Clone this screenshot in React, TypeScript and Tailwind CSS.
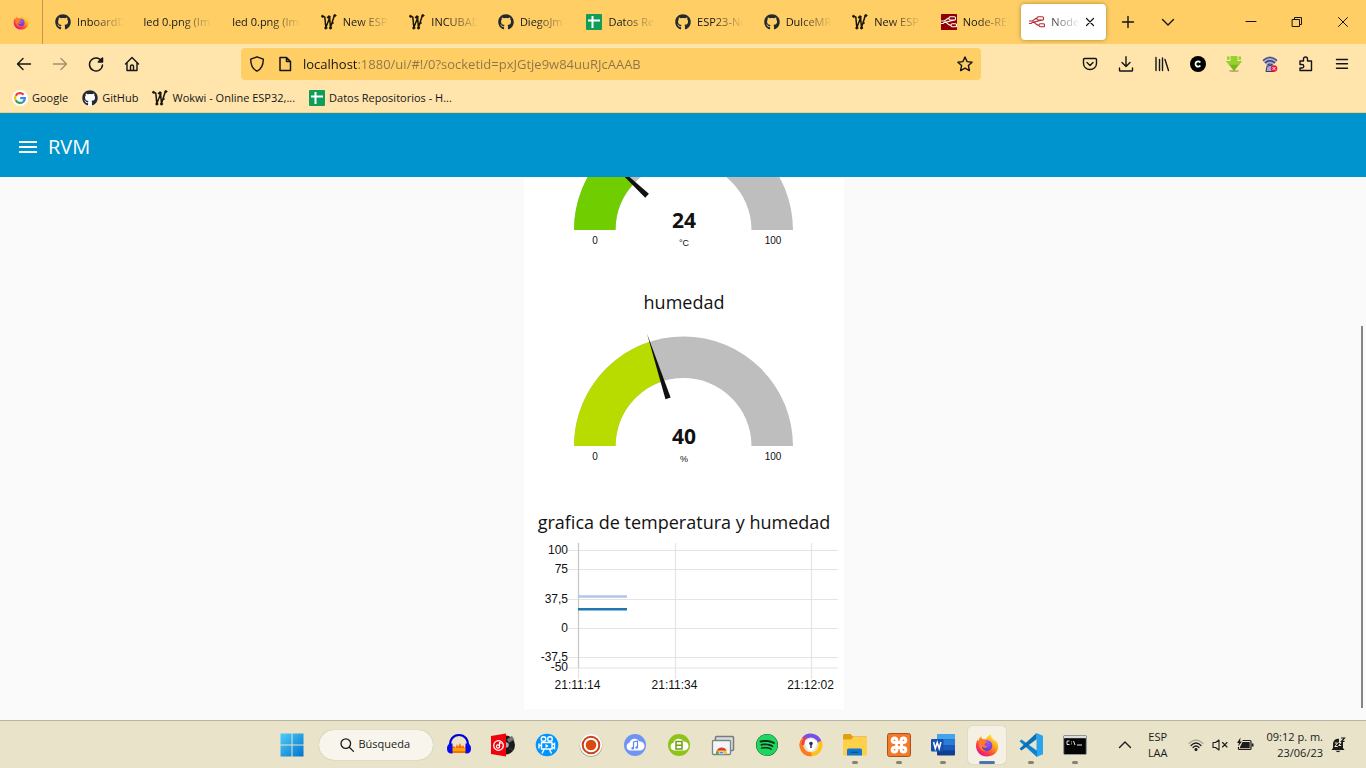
import type { ReactNode } from "react";
import { FaGithub, FaSpotify } from "react-icons/fa";
import { SiXampp } from "react-icons/si";

const stroke = {
  fill: "none",
  stroke: "currentColor",
  strokeLinecap: "round" as const,
  strokeLinejoin: "round" as const,
};

function Icon({ d, width = 1.4 }: { d: string; width?: number }) {
  return (
    <svg viewBox="0 0 16 16" className="size-4 shrink-0" {...stroke} strokeWidth={width} aria-hidden="true">
      <path d={d} />
    </svg>
  );
}

function Firefox({ className, id }: { className: string; id: string }) {
  return (
    <svg viewBox="0 0 24 24" className={className} aria-hidden="true">
      <defs>
        <linearGradient id={`${id}-body`} x1="0.85" y1="0.1" x2="0.2" y2="0.95">
          <stop offset="0" stopColor="#fff044" />
          <stop offset="0.35" stopColor="#ffa41c" />
          <stop offset="0.65" stopColor="#ff4f36" />
          <stop offset="1" stopColor="#e8118a" />
        </linearGradient>
        <radialGradient id={`${id}-globe`} cx="0.6" cy="0.25" r="0.8">
          <stop offset="0" stopColor="#b14dff" />
          <stop offset="1" stopColor="#4c42c7" />
        </radialGradient>
      </defs>
      <path
        d="M16.2 1c-.4 2 .2 3.4 1.7 4.7 1 .9 1.8 1.8 2.2 2.7.1-.8 0-1.3-.2-1.9 2.5 2.2 3.5 5 3.2 8C22.5 20 17.8 23.4 12 23.4 5.700 23.400 1 18.800 1 12.700c0-2.500.7-4.600 1.900-6.200 0 .7.1 1.200.4 1.700C3.800 6.300 4.700 4.600 6.200 3.200c.1 1.300.6 2.400 1.600 3.100 1-.3 2.300-.4 3.300-.1.8-2.200 2.700-4.200 5.100-5.200z"
        fill={`url(#${id}-body)`}
      />
      <circle cx="12" cy="12.6" r="5.300" fill={`url(#${id}-globe)`} />
      <path
        d="M3.500 8.200c1.300-1.700 3-2.200 5-1.700.4 1 1.400 1.700 3.500 2-.2 1.400-1.400 1.700-2.600 2.300 0 2 1.700 2.900 3.600 2.500-1.200 1.700-4.100 1.900-5.700.2-.5 2.200 1.400 4.500 4.600 4.500-4.500 1.500-8.700-2-8.400-9.800z"
        fill="#ff7a2a"
      />
    </svg>
  );
}

function Github() {
  return <FaGithub className="size-4 shrink-0 text-[#24292f]" />;
}

function Wokwi() {
  return (
    <svg viewBox="0 0 16 16" className="size-4 shrink-0 text-[#1a1508]" {...stroke} strokeWidth="1.5">
      <path d="M1.500 2.500 3.800 3l1 10.500L8.600 4l.9 9.500L13 2.500" />
      <path d="M6.500 3.500 8.600 4" />
      <g fill="currentColor" strokeWidth="0.8">
        <circle cx="1.5" cy="2.3" r="1" />
        <circle cx="4.8" cy="14" r="1.1" />
        <circle cx="9.5" cy="14" r="1.1" />
        <circle cx="8" cy="2.8" r="1.1" />
        <circle cx="13.8" cy="1.6" r="1.1" />
        <circle cx="11.7" cy="9" r="0.5" />
      </g>
    </svg>
  );
}

function Sheets() {
  return (
    <svg viewBox="0 0 16 16" className="size-4 shrink-0">
      <rect width="16" height="16" rx="1" fill="#0f9d58" />
      <path d="M2 6.500h12M6.500 2v12" stroke="#fff" strokeWidth="2" />
    </svg>
  );
}

function NodeRed({ active = false }: { active?: boolean }) {
  return (
    <svg viewBox="0 0 16 16" className="size-4 shrink-0">
      {!active && <rect width="16" height="16" rx="0.5" fill="#8f0000" />}
      <g fill="none" stroke={active ? "#b02a30" : "#fff"} strokeWidth="1.1">
        <rect x="8" y="2.7" width="6.5" height="3.4" rx="1.2" />
        <rect x="10" y="9.8" width="5.5" height="3" rx="1.2" />
        <path d="M0 7h2.500c3 0 2.500-2.600 5.500-2.600M0 9.500h2l1.500-1.200C7 8 6 11.300 10 11.300M3.500 8c5 0 5-1.600 9-1.500" />
      </g>
    </svg>
  );
}

function Google() {
  return (
    <svg viewBox="0 0 16 16" className="size-4 shrink-0">
      <circle cx="8" cy="8" r="8" fill="#fff" />
      <g fill="none" strokeWidth="2.2">
        <path d="M11.600 4.700A4.900 4.900 0 0 0 3.700 5.700" stroke="#ea4335" />
        <path d="M3.700 5.600a4.900 4.900 0 0 0 0 4.800" stroke="#fbbc05" />
        <path d="M3.700 10.300a4.900 4.900 0 0 0 7.600 1.400" stroke="#34a853" />
        <path d="M11.200 11.800A4.900 4.900 0 0 0 12.900 8.200H8.200" stroke="#4285f4" />
      </g>
    </svg>
  );
}

const tabs: { label: string; icon?: ReactNode }[] = [
  { label: "InboardDev", icon: <Github /> },
  { label: "led 0.png (Imagen" },
  { label: "led 0.png (Imagen" },
  { label: "New ESP32", icon: <Wokwi /> },
  { label: "INCUBADORA", icon: <Wokwi /> },
  { label: "DiegoJm10", icon: <Github /> },
  { label: "Datos Repos", icon: <Sheets /> },
  { label: "ESP23-Node", icon: <Github /> },
  { label: "DulceMRod", icon: <Github /> },
  { label: "New ESP32", icon: <Wokwi /> },
  { label: "Node-RED", icon: <NodeRed /> },
];

const fade =
  "min-w-0 flex-1 overflow-hidden whitespace-nowrap text-left [mask-image:linear-gradient(to_right,#000_calc(100%-32px),transparent)]";

function TabStrip() {
  return (
    <div className="flex h-11 shrink-0 items-center bg-[#ffcf66]">
      <button aria-label="Firefox View" className="flex h-full w-[43px] items-center justify-center border-r border-[#c09a4a]">
        <Firefox className="size-4" id="view" />
      </button>
      <div className="ml-0.5 flex min-w-0 flex-1 items-center">
        {tabs.map((tab, i) => (
          <button key={i} className="mx-0.5 flex h-9 min-w-0 flex-1 items-center gap-1.5 px-2">
            {tab.icon}
            <span className={fade}>{tab.label}</span>
          </button>
        ))}
        <div className="mx-0.5 flex h-9 min-w-0 flex-1 items-center gap-1.5 rounded bg-white px-2 shadow-[0_0_4px_rgba(90,60,0,0.5)]">
          <NodeRed active />
          <button className={fade}>Node-RED</button>
          <button aria-label="Cerrar pestaña" className="-ml-1">
            <Icon d="M4.500 4.500l7 7M11.500 4.500l-7 7" width={1.2} />
          </button>
        </div>
      </div>
      <button aria-label="Nueva pestaña" className="flex w-10 justify-center">
        <Icon d="M8 2.500v11M2.500 8h11" />
      </button>
      <button aria-label="Listar pestañas" className="mr-10 flex w-10 justify-center">
        <Icon d="M2.500 5.500 8 11l5.500-5.500" />
      </button>
      <button aria-label="Minimizar" className="flex w-[46px] justify-center">
        <Icon d="M3 7.500h10" width={1} />
      </button>
      <button aria-label="Restaurar" className="flex w-[46px] justify-center">
        <Icon d="M3.500 5.500h7v7h-7zM5.500 5.500v-2h7v7h-2" width={1} />
      </button>
      <button aria-label="Cerrar" className="flex w-[46px] justify-center">
        <Icon d="M3.500 3.500l9 9M12.500 3.500l-9 9" width={1} />
      </button>
    </div>
  );
}

function ToolButton({ label, children, dim = false }: { label: string; children: ReactNode; dim?: boolean }) {
  return (
    <button
      aria-label={label}
      className={dim ? "flex h-8 w-9 items-center justify-center opacity-40" : "flex h-8 w-9 items-center justify-center"}
    >
      {children}
    </button>
  );
}

function Toolbar() {
  return (
    <div className="flex h-10 shrink-0 items-center bg-[#ffe5ab] px-1.5">
      <ToolButton label="Atrás"><Icon d="M14.500 8h-13M7 2.500 1.500 8 7 13.500" /></ToolButton>
      <ToolButton label="Adelante" dim><Icon d="M1.500 8h13M9 2.500 14.500 8 9 13.500" /></ToolButton>
      <ToolButton label="Recargar"><Icon d="M13.800 5.500A6.500 6.500 0 1 0 14.500 9M14.500 2v4h-4.200z" width={1.5} /></ToolButton>
      <ToolButton label="Inicio"><Icon d="M1.500 8 8 1.500 14.500 8M3 7v7.500h10V7M6.500 14.500V10q0-1 1.500-1t1.500 1v4.500" /></ToolButton>
      <div className="mx-[91px] flex h-8 min-w-0 flex-1 items-center rounded bg-[#ffcf66] px-2">
        <Icon d="M8 .8 14.300 3.200C14.300 9 12.500 13 8 15.200 3.500 13 1.700 9 1.700 3.200z" />
        <span className="ml-3 flex"><Icon d="M3 1.500h6.500l4 4v9H3zM9.500 1.500v4h4" width={1.5} /></span>
        <input
          aria-label="Dirección"
          defaultValue="localhost:1880/ui/#!/0?socketid=pxJGtje9w84uuRJcAAAB"
          className="mx-2.5 min-w-0 flex-1 bg-[linear-gradient(to_right,#15141a_54px,#8b7447_54px)] bg-clip-text pt-0.5 text-[13px] text-transparent outline-none"
        />
        <Icon d="M8 1l2.100 4.600 5 .6-3.700 3.400 1 5L8 12.100l-4.400 2.500 1-5L.9 6.200l5-.6z" />
      </div>
      <ToolButton label="Pocket"><Icon d="M2.500 2.500h11q1 0 1 1v4a6.500 6 0 0 1-13 0v-4q0-1 1-1zM5 6.500l3 3 3-3" /></ToolButton>
      <ToolButton label="Descargas"><Icon d="M8 .8v9.500M4 6.500l4 4 4-4M1.500 12v2.200q0 .8.8.8h11.400q.8 0 .8-.8V12" /></ToolButton>
      <ToolButton label="Biblioteca"><Icon d="M2 1.500v13M5.500 3.500v11M8.500 2v12.500M11 3.500l3.500 11" /></ToolButton>
      <ToolButton label="Extensión C">
        <svg viewBox="0 0 16 16" className="size-4">
          <circle cx="8" cy="8" r="8" fill="#000" />
          <path d="M10.300 6.600a2.600 2.600 0 1 0 0 2.800" fill="none" stroke="#fff" strokeWidth="1.8" />
        </svg>
      </ToolButton>
      <ToolButton label="Descargador">
        <svg viewBox="0 0 16 16" className="size-4">
          <ellipse cx="8" cy="15" rx="5" ry="0.9" fill="#b9a77c" />
          <path d="M4.800 0h6.400v5H16L8 15 0 5h4.800z" fill="#76b818" />
          <path d="M4.800 0h6.400v5H16l-3 3.800H3L0 5h4.800z" fill="#96d22e" />
          <path d="M1 .5h2.500v3.200H1zM12.500.5H15v3.200h-2.500z" fill="#96d22e" />
        </svg>
      </ToolButton>
      <ToolButton label="Bloqueador">
        <svg viewBox="0 0 16 16" className="size-4" fill="none">
          <path d="M.5 4q7.500-7.500 15 0L14 6.500 11.500 8v7.500h-8L4.500 8 2 6.500z" fill="#a9acd0" />
          <path d="M4 15.500l1-5q3-2.500 6 0l1 5z" fill="#a9acd0" stroke="#3c3c63" />
          <path d="M1 4.500q7-6 14 0M3 7q5-4.500 10 0M5.500 9q2.500-2 5 0" stroke="#3c3c63" strokeWidth="1.2" />
          <circle cx="12" cy="12.5" r="3.3" fill="#f01845" />
          <path d="M10.700 11.200l2.600 2.600M13.300 11.200l-2.600 2.600" stroke="#fff" />
        </svg>
      </ToolButton>
      <ToolButton label="Extensiones"><Icon d="M2 6.500V5h3.500V3a1.600 1.600 0 0 1 4 0v2h4v9.500H2V12h2a1.600 1.600 0 0 0 0-3.500H2z" /></ToolButton>
      <ToolButton label="Menú"><Icon d="M2.500 3.500h11M2.500 7.800h11M2.500 12.200h11" /></ToolButton>
    </div>
  );
}

function Bookmarks() {
  const items = [
    { label: "Google", icon: <Google /> },
    { label: "GitHub", icon: <span className="rounded-full bg-white"><Github /></span> },
    { label: "Wokwi - Online ESP32,...", icon: <Wokwi /> },
    { label: "Datos Repositorios - H...", icon: <Sheets /> },
  ];
  return (
    <nav className="flex h-[29px] shrink-0 items-center gap-3.5 border-b border-[#ffcf66] bg-[#ffe5ab] px-3">
      {items.map((item) => (
        <a key={item.label} href="#" className="flex items-center gap-1 whitespace-nowrap">
          {item.icon}
          {item.label}
        </a>
      ))}
    </nav>
  );
}

const CX = 159.5;
const CY = 130;
const OUTER = 109.5;
const INNER = 68;

function polar(radius: number, value: number, offset = 0) {
  const a = Math.PI * (1 - value / 100);
  const x = CX + radius * Math.cos(a) + offset * Math.sin(a);
  const y = CY - radius * Math.sin(a) + offset * Math.cos(a);
  return `${x.toFixed(2)} ${y.toFixed(2)}`;
}

function arc(value: number) {
  return `M${polar(OUTER, 0)}A${OUTER} ${OUTER} 0 0 1 ${polar(OUTER, value)}L${polar(INNER, value)}A${INNER} ${INNER} 0 0 0 ${polar(INNER, 0)}z`;
}

function Gauge({ title, value, unit, color }: { title: string; value: number; unit: string; color: string }) {
  return (
    <section className="shrink-0">
      <h2 className="text-center text-lg/7 text-[#111]">{title}</h2>
      <svg viewBox="0 0 320 188" className="block w-full" role="img" aria-label={title} textAnchor="middle" fill="#111">
        <path d={arc(100)} fill="#bebebe" />
        <path d={arc(value)} fill={color} />
        <path d={`M${polar(118, value)}L${polar(50, value, 2.7)}L${polar(50, value, -2.7)}z`} />
        <text x="160" y="128" className="text-[21px] font-bold">{value}</text>
        <g className="font-['Liberation_Sans',sans-serif]">
          <text x="71" y="144" className="text-[10px]">0</text>
          <text x="249" y="144" className="text-[10px]">100</text>
          <text x="160" y="146" className="text-[9px]">{unit}</text>
        </g>
      </svg>
    </section>
  );
}

const yTicks = [
  { label: "100", y: 14.5 },
  { label: "75", y: 33.5 },
  { label: "37,5", y: 63.5 },
  { label: "0", y: 92.5 },
  { label: "-37,5", y: 121.5 },
  { label: "-50", y: 132 },
];
const xTicks = [
  { label: "21:11:14", x: 54.5 },
  { label: "21:11:34", x: 151.5 },
  { label: "21:12:02", x: 287.5 },
];

function Chart() {
  return (
    <section className="shrink-0 pt-1">
      <h2 className="text-center text-lg/7 whitespace-nowrap text-[#111]">grafica de temperatura y humedad</h2>
      <svg
        viewBox="0 0 320 173"
        className="block w-full font-['Liberation_Sans',sans-serif] text-[12px]"
        role="img"
        aria-label="grafica de temperatura y humedad"
        fill="#111"
      >
        <g stroke="#e4e4e4" strokeWidth="1.2">
          {yTicks.map((t) => (
            <path key={t.label} d={`M44 ${t.y}H314`} />
          ))}
          {xTicks.map((t) => (
            <path key={t.label} d={`M${t.x} 7V143`} />
          ))}
          <path d="M54.500 7V132" stroke="#c8c8c8" />
        </g>
        {yTicks.map((t) => (
          <text key={t.label} x="44" y={t.y + 3} textAnchor="end">{t.label}</text>
        ))}
        {xTicks.map((t) => (
          <text key={t.label} x={t.x - 1} y="153" textAnchor="middle">{t.label}</text>
        ))}
        <path d="M54 60.500H103" stroke="#aec7e8" strokeWidth="2.5" />
        <path d="M54 73.300H103" stroke="#1f77b4" strokeWidth="2.5" />
      </svg>
    </section>
  );
}

function CloudBadge({ color, children }: { color: string; children: ReactNode }) {
  return (
    <svg viewBox="0 0 24 24" className="size-6">
      <circle cx="12" cy="12" r="11" fill={color} />
      <path d="M7 17.500a4 4 0 0 1-.5-7.800A5.500 5.500 0 0 1 16.500 8.500a4.500 4.500 0 0 1 1 9z" fill="#fff" />
      {children}
    </svg>
  );
}

const apps: { name: string; icon: ReactNode; state?: "open" | "active" }[] = [
  {
    name: "Audacity",
    icon: (
      <svg viewBox="0 0 24 24" className="size-6">
        <path d="M5 20v-6l2-1 1.500 2 1.500-4 1 3 2-4 1.500 4L16 12l1.500 3L19 13v7z" fill="#ff6a00" />
        <path d="M5 15h14v3H5z" fill="#ffd000" opacity="0.6" />
        <path d="M3 14C2.500 6 6.500 2 12 2s9.500 4 9 12" fill="none" stroke="#0000d8" strokeWidth="2.2" />
        <path d="M5.500 10.500v10q-5.500.5-5.500-5t5.500-5zM18.500 10.500v10q5.500.5 5.500-5t-5.500-5z" fill="#0808e8" />
      </svg>
    ),
  },
  {
    name: "Grabador de música",
    icon: (
      <svg viewBox="0 0 24 24" className="size-6">
        <circle cx="14.5" cy="12" r="9.5" fill="#1c1c1c" />
        <path d="M16 6.500l5-3.200 2 3.200-5 3zM18 15l4.500 2.500" fill="#777" stroke="#666" strokeWidth="0.5" />
        <circle cx="15" cy="12" r="2.8" fill="#aaa" />
        <path d="M0 3 15 .5v23L0 21z" fill="#f2000c" />
        <circle cx="7.5" cy="12.5" r="4.8" fill="none" stroke="#fff" strokeWidth="1.3" />
        <circle cx="7" cy="13.5" r="1.6" fill="none" stroke="#fff" strokeWidth="1.2" />
        <path d="M8.500 13.500V9.500l2 1" fill="none" stroke="#fff" strokeWidth="1.2" />
      </svg>
    ),
  },
  {
    name: "Editor de video",
    icon: (
      <svg viewBox="0 0 24 24" className="size-6">
        <circle cx="12" cy="12" r="11.3" fill="#0094ff" />
        <g fill="none" stroke="#fff" strokeWidth="1.4">
          <circle cx="8.5" cy="6" r="2.3" />
          <circle cx="15" cy="6" r="2.3" />
          <path d="M6.500 9.500h10.500v6.500H6.500zM17 12l2.500-1.500v5L17 14M4 10.500v5M4 12.500h2.500M9 16.500l-2 4M14.500 16.500l2 4" />
        </g>
        <path d="M10.500 11v4l3.200-2z" fill="#fff" />
      </svg>
    ),
  },
  {
    name: "Grabadora de pantalla",
    icon: (
      <svg viewBox="0 0 24 24" className="size-6">
        <circle cx="12" cy="12.5" r="11.3" fill="#9c9484" />
        <circle cx="12" cy="12" r="11" fill="#fff" />
        <circle cx="12" cy="12" r="8.3" fill="#fff" stroke="#c8431a" strokeWidth="2" />
        <circle cx="12" cy="12" r="5.3" fill="#d94a10" />
      </svg>
    ),
  },
  {
    name: "Música en la nube",
    icon: (
      <CloudBadge color="#6f93f7">
        <path d="M10.500 15.500V9l4-1v6.500" fill="none" stroke="#6386f0" strokeWidth="1.2" />
        <circle cx="9.7" cy="15.3" r="1.3" fill="#6386f0" />
        <circle cx="13.7" cy="14.5" r="1.3" fill="#6386f0" />
      </CloudBadge>
    ),
  },
  {
    name: "Video en la nube",
    icon: (
      <CloudBadge color="#8fc31a">
        <path d="M9 8.500h6v7.500H9zM9 12.200h6" fill="none" stroke="#6f9f10" strokeWidth="1.5" />
      </CloudBadge>
    ),
  },
  {
    name: "Escritorio remoto de Chrome",
    icon: (
      <svg viewBox="0 0 24 24" className="size-6">
        <rect x="4.5" y="3.5" width="18" height="14" rx="1" fill="#d8dcdf" stroke="#777b80" strokeWidth="1.5" />
        <rect x="1.5" y="7.500" width="18" height="14" rx="1" fill="#f4f5f6" stroke="#7f8387" strokeWidth="1.3" />
        <path d="M5 20.700a5.500 5.500 0 0 1 11 0z" fill="#fbc116" />
        <path d="M5.700 17.500a5.700 5.700 0 0 1 10 0h-5.200z" fill="#e33b2e" />
        <path d="M5 20.700q0-2 .8-3.200l2.700 3.200z" fill="#2da94f" />
        <path d="M8 20.700a2.500 2.500 0 0 1 5 0z" fill="#4285f4" stroke="#fff" strokeWidth="0.6" />
      </svg>
    ),
  },
  {
    name: "Spotify",
    icon: (
      <span className="flex size-6 items-center justify-center">
        <span className="rounded-full bg-[#12301c]"><FaSpotify className="size-[22px] text-[#1ed760]" /></span>
      </span>
    ),
  },
  {
    name: "Navegador seguro",
    icon: (
      <svg viewBox="0 0 24 24" className="size-6" fill="none">
        <path d="M4.500 6A9.200 9.200 0 0 1 20.500 9" stroke="#7450e8" strokeWidth="4" />
        <path d="M20.800 8.500a9.200 9.200 0 0 1-9 12.700" stroke="#ffc21a" strokeWidth="4" />
        <path d="M12.500 21.200A9.200 9.200 0 0 1 4.700 6" stroke="#ff7a1c" strokeWidth="4" />
        <path d="M4 12q-.5-4 3-8" stroke="#ef3e55" strokeWidth="2.5" />
        <path d="M12 5.500l6 2.300q.5 7.500-6 10.700Q5.500 15.300 6 7.800z" fill="#fff" />
        <circle cx="12" cy="10.5" r="1.8" fill="#26305c" />
        <path d="M12 11v4" stroke="#26305c" strokeWidth="1.5" />
      </svg>
    ),
  },
  {
    name: "Explorador de archivos",
    state: "open",
    icon: (
      <svg viewBox="0 0 24 24" className="size-6">
        <path d="M0 2.500q0-1.500 1.500-1.500h6L10 3.500h13q1 0 1 1V9H0z" fill="#e0a010" />
        <path d="M0 6.500h8l2.500-2.500H24v17.500q0 1-1 1H1q-1 0-1-1z" fill="#ffd04a" />
        <path d="M4 22.500V17q0-1.500 1.500-1.500h12q1.500 0 1.500 1.500v5.500z" fill="#0f78d0" />
        <path d="M7.500 19.300h8" stroke="#0a4f96" strokeWidth="1.2" />
      </svg>
    ),
  },
  {
    name: "XAMPP",
    state: "open",
    icon: (
      <svg viewBox="0 0 24 24" className="size-6">
        <rect x="0.5" y="0.5" width="23" height="23" rx="2" fill="#f47a2a" stroke="#a9521f" />
        <g fill="none" stroke="#fff" strokeWidth="3" strokeLinecap="round">
          <path d="M9.500 9.500H7.500a2.300 2.300 0 1 1 2.300-2.300c0 2 1.200 2.300 2.200 2.300s2.200-.3 2.200-2.300a2.300 2.300 0 1 1 2.300 2.300q-2 0-2 2.500t2 2.500a2.300 2.300 0 1 1-2.300 2.300c0-2-1.200-2.300-2.200-2.300s-2.200.3-2.200 2.300a2.300 2.300 0 1 1-2.300-2.300q2 0 2-2.500" />
        </g>
      </svg>
    ),
  },
  {
    name: "Word",
    state: "open",
    icon: (
      <svg viewBox="0 0 24 24" className="size-6">
        <rect x="6" y="1" width="18" height="21.5" rx="1" fill="#103f91" />
        <path d="M6 1h18v5.500H6z" fill="#41a5ee" />
        <path d="M6 6.500h18V12H6z" fill="#2b7cd3" />
        <path d="M6 12h18v5.300H6z" fill="#185abd" />
        <rect x="0" y="6" width="12.5" height="12.5" rx="1" fill="#1650ae" />
        <path d="M2.600 9l1.700 6.500L6.250 9.500l1.950 6L9.900 9" fill="none" stroke="#fff" strokeWidth="1.5" />
      </svg>
    ),
  },
  { name: "Firefox", state: "active", icon: <Firefox className="size-6" id="task" /> },
  {
    name: "Visual Studio Code",
    state: "open",
    icon: (
      <svg viewBox="0 0 24 24" className="size-6">
        <path d="M17.500 0 24 2.800v18.400L17.500 24z" fill="#29a5ef" />
        <path d="M2.500 6.500.5 8.300 14 20.500l4 3.500v-6.200z" fill="#0b83d0" />
        <path d="M2.500 17.500.5 15.700 17.500 0v6.200z" fill="#0671b8" />
      </svg>
    ),
  },
  {
    name: "Símbolo del sistema",
    state: "open",
    icon: (
      <svg viewBox="0 0 24 24" className="size-6">
        <rect x="0.7" y="2.5" width="22.6" height="19" rx="1" fill="#050505" stroke="#8f9499" />
        <path d="M1 3h22v2.200H1z" fill="#dadde0" />
        <path d="M6.500 8H4v3.500h2.500M8.500 8.500v.8M8.500 10.500v.8M10.500 8l1.500 4M14 12h5" fill="none" stroke="#e8e8e8" />
      </svg>
    ),
  },
];

function Taskbar() {
  return (
    <footer className="grid h-12 shrink-0 grid-cols-[1fr_auto_1fr] border-t border-[#b6b49e] bg-[#e8e3c9] text-[#1b1b1b]">
      <span />
      <div className="flex items-center">
        <button aria-label="Inicio" className="flex w-11 justify-center">
          <svg viewBox="0 0 24 24" className="size-6">
            <defs>
              <linearGradient id="win" x1="0" y1="0" x2="24" y2="24" gradientUnits="userSpaceOnUse">
                <stop stopColor="#4fd0fa" />
                <stop offset="1" stopColor="#0070cc" />
              </linearGradient>
            </defs>
            <path d="M.5.5h11v11H.5zM12.500.5h11v11h-11zM.5 12.500h11v11H.5zM12.500 12.500h11v11h-11z" fill="url(#win)" />
          </svg>
        </button>
        <label className="mr-1 ml-[5px] flex h-[30px] w-[114px] items-center gap-1 rounded-full bg-[#f7f5ec] pl-5 shadow-[0_0_1px_rgba(0,0,0,0.3)]">
          <Icon d="M6.800 1.800a4.800 4.800 0 1 0 0 9.600 4.800 4.800 0 0 0 0-9.600zM10.300 10.200l4.200 4.200" width={1.3} />
          <input
            type="search"
            aria-label="Búsqueda"
            placeholder="Búsqueda"
            className="w-full min-w-0 bg-transparent outline-none placeholder:text-[#1b1b1b]"
          />
        </label>
        {apps.map((app) => (
          <button key={app.name} aria-label={app.name} className="flex w-11 justify-center">
            <span
              className={
                app.state === "active"
                  ? "flex h-[38px] w-[38px] flex-col items-center justify-between rounded bg-[#f4f1e4] pt-[7px] shadow-[0_0_1px_rgba(0,0,0,0.3)]"
                  : "flex h-[38px] w-[38px] flex-col items-center justify-between pt-[7px]"
              }
            >
              {app.icon}
              {app.state === "open" && <span className="h-[3px] w-1.5 rounded-full bg-[#85826f]" />}
              {app.state === "active" && <span className="h-[3px] w-4 rounded-full bg-[#4b76ab]" />}
            </span>
          </button>
        ))}
      </div>
      <div className="flex items-center justify-end pr-5">
        <button aria-label="Iconos ocultos"><Icon d="M2.500 10.500 8 5l5.500 5.500" /></button>
        <div className="ml-[15px] text-center leading-4">ESP<br />LAA</div>
        <button aria-label="Red, volumen y batería" className="ml-5 flex items-center gap-2">
          <svg viewBox="0 0 16 16" className="size-4" {...stroke} strokeWidth="1.2">
            <path d="M1 6.500Q8-.5 15 6.500" opacity="0.3" />
            <path d="M3 8.500q5-5 10 0M5 10.500q3-3 6 0" />
            <circle cx="8" cy="12.5" r="1" fill="currentColor" />
          </svg>
          <Icon d="M1 5.500h2.500L7 3v10l-3.500-2.500H1zM10.500 5.500l4.500 4.500M15 5.500 10.500 10" width={1.1} />
          <svg viewBox="0 0 18 16" className="h-4 w-[18px]" fill="currentColor">
            <path d="M6.500 3.500H14q1 0 1 1v7q0 1-1 1H3.500q-1 0-1-1V10" fill="none" stroke="currentColor" strokeWidth="1.2" />
            <path d="M6.500 5h7.200v6.200H4V10zM15.800 6.500h1.700v3h-1.700zM4.500.5 1 6h2L2 9.500l4-5H4z" />
          </svg>
        </button>
        <div className="ml-[13px] text-right leading-4 whitespace-nowrap">09:12 p. m.<br />23/06/23</div>
        <button aria-label="Notificaciones" className="ml-[7px]">
          <svg viewBox="0 0 16 16" className="size-4">
            <path d="M3 11V6.500A5 5 0 0 1 9 1.800V5h4v6l1.500 2h-13zM5.500 13.800h5q-2.500 2.800-5 0z" fill="currentColor" />
            <path d="M11 1h3.500L11.500 4.300h3" fill="none" stroke="currentColor" strokeWidth="1.2" />
            <path d="M4.800 6h2.800L4.800 9.500h3M8.500 5.500h2.500L8.700 8.500h2.500" fill="none" stroke="#e8e3c9" />
          </svg>
        </button>
      </div>
    </footer>
  );
}

export default function App() {
  return (
    <div className="flex h-screen flex-col overflow-hidden bg-[#fafafa] font-['Open_Sans','Noto_Sans',sans-serif] text-[11px] text-[#15141a]">
      <TabStrip />
      <Toolbar />
      <Bookmarks />
      <header className="flex h-16 shrink-0 items-center bg-[#0094ce] px-4 pt-1 text-white">
        <button aria-label="Abrir menú">
          <svg viewBox="0 0 24 24" className="size-6" fill="currentColor">
            <path d="M3 18h18v-2H3zM3 13h18v-2H3zM3 6v2h18V6z" />
          </svg>
        </button>
        <h1 className="ml-2 text-xl">RVM</h1>
      </header>
      <main className="relative flex min-h-0 flex-1 flex-col items-center justify-end overflow-hidden pb-[11px] pl-0.5">
        <div className="flex w-80 shrink-0 flex-col bg-white">
          <Gauge title="temperatura" value={24} unit="°C" color="#70ce00" />
          <Gauge title="humedad" value={40} unit="%" color="#b8dc00" />
          <Chart />
        </div>
        <div className="absolute right-[3px] bottom-3 h-[382px] w-0.5 bg-[#85858a]" />
      </main>
      <Taskbar />
    </div>
  );
}
